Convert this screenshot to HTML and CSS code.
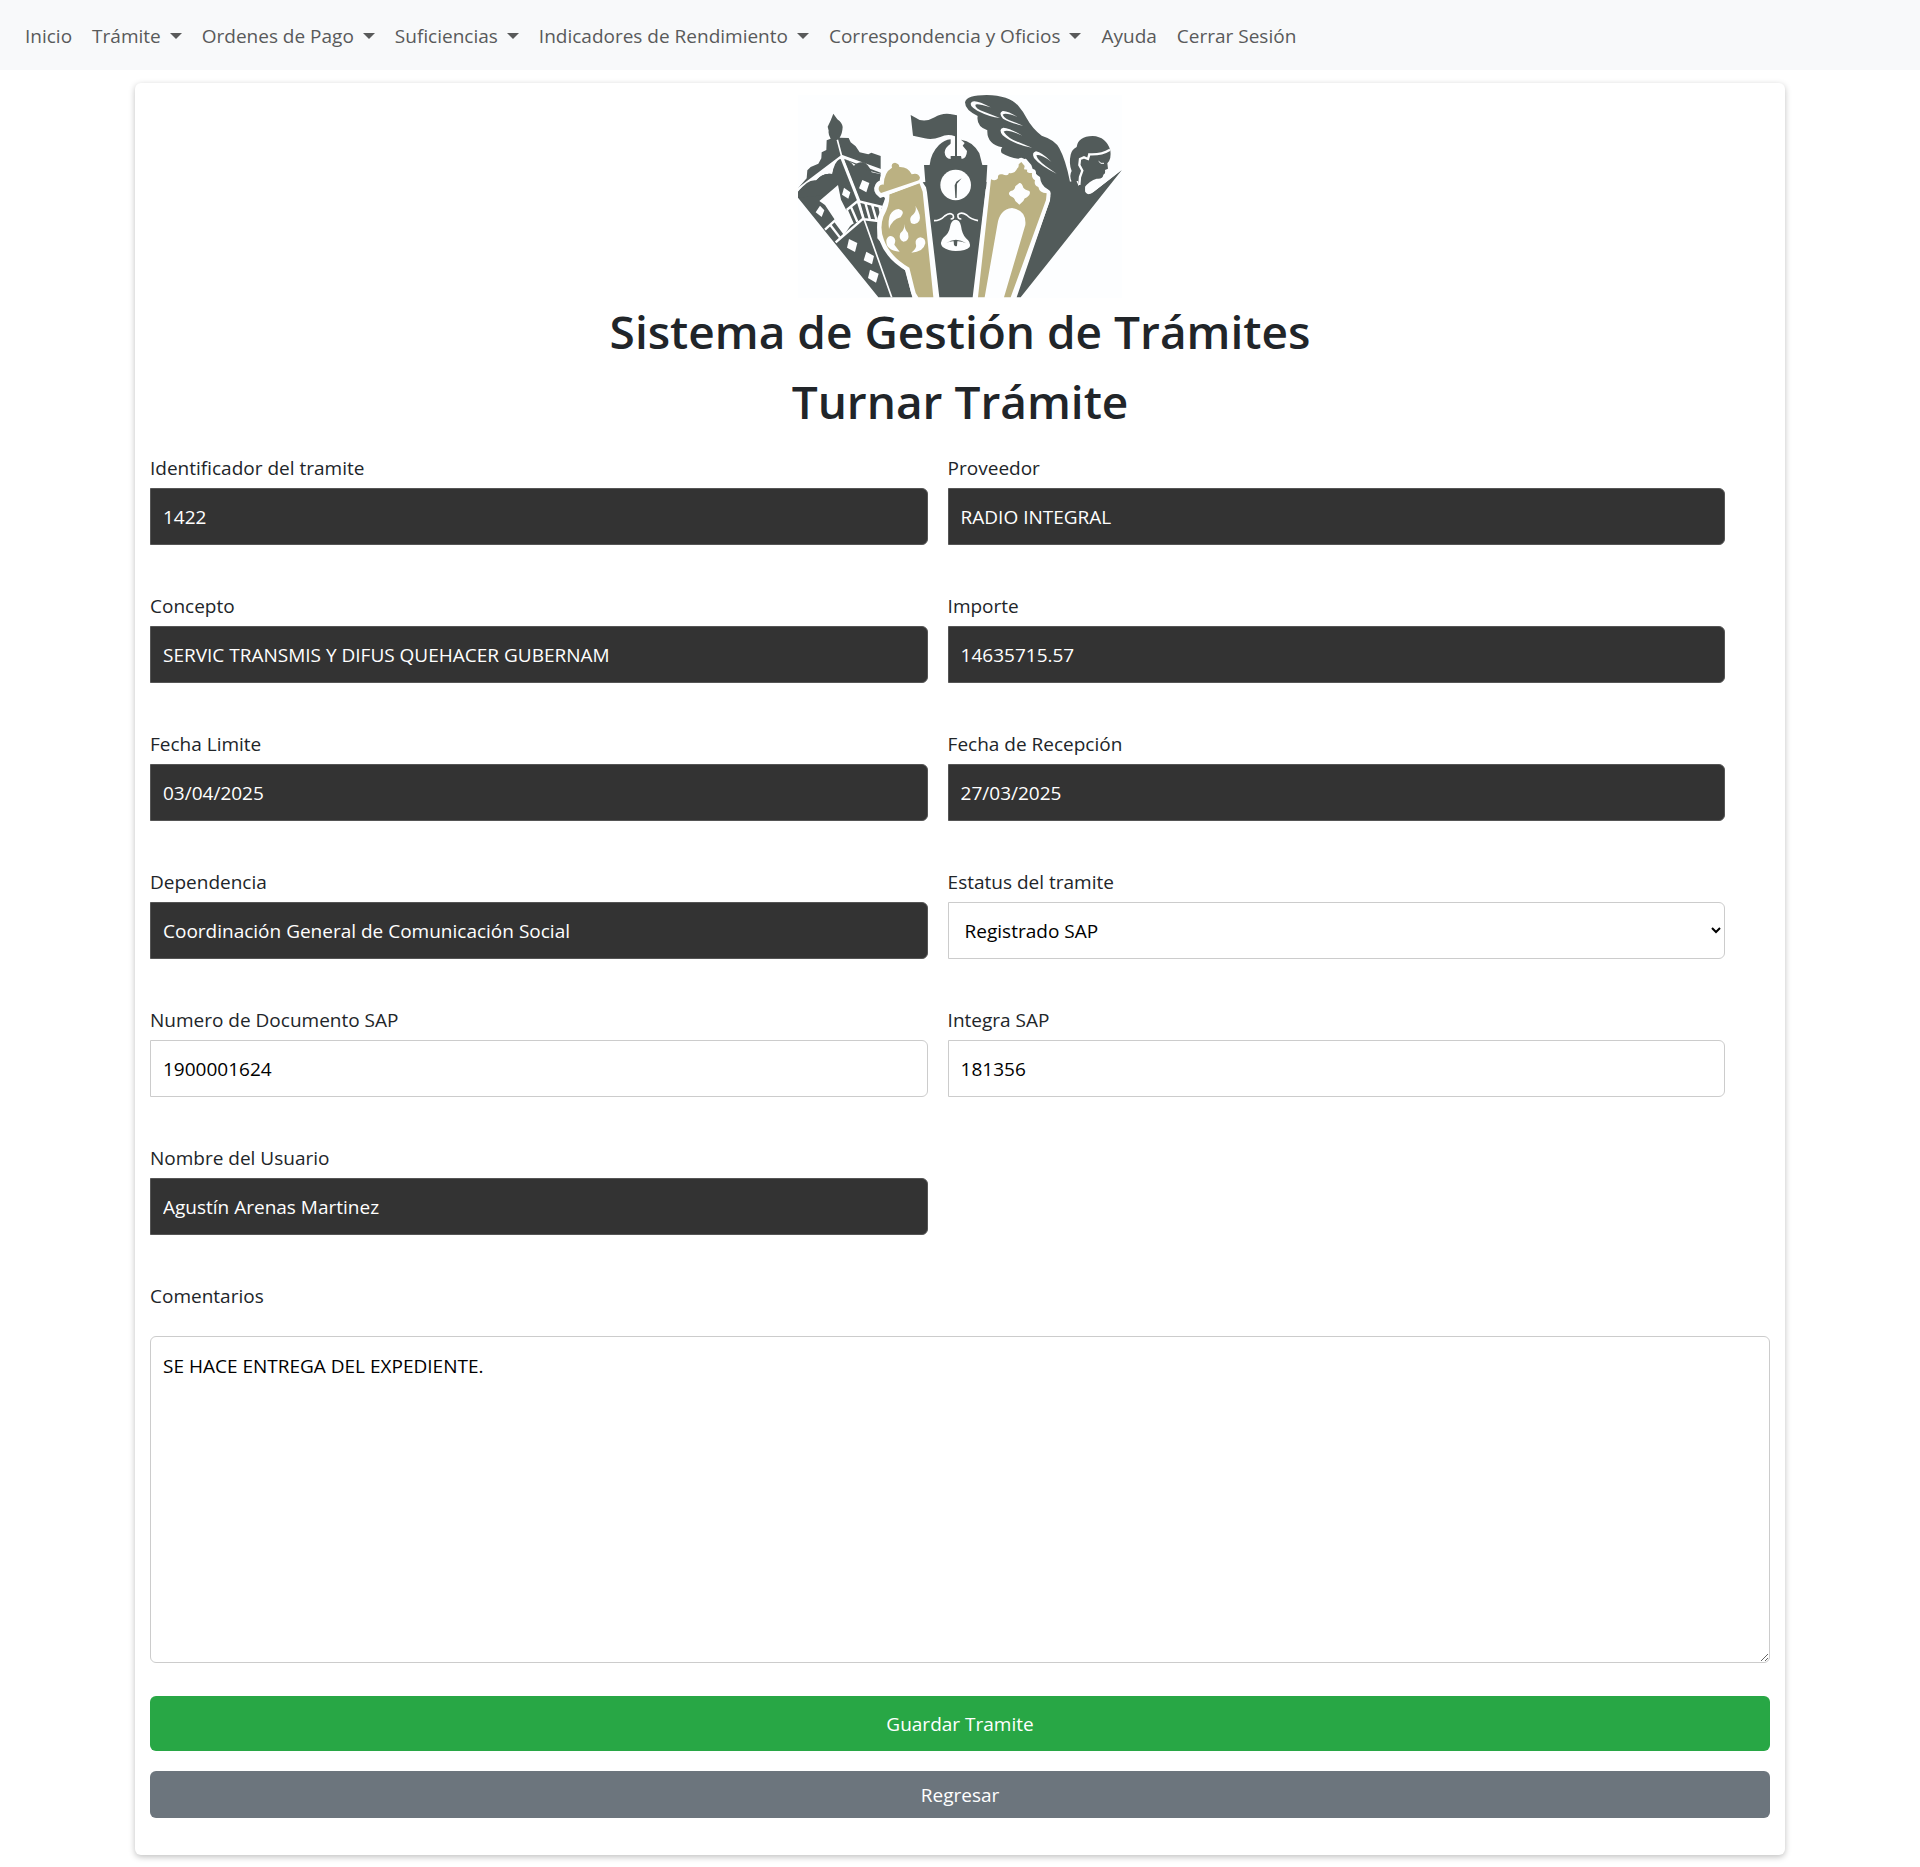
FILE: index.html
```html
<!DOCTYPE html>
<html lang="es">
<head>
<meta charset="utf-8">
<meta name="viewport" content="width=device-width, initial-scale=1">
<title>Turnar Trámite</title>
<link rel="stylesheet" href="styles.css">
</head>
<body>
<nav class="navbar">
  <a class="nav-link" href="#">Inicio</a>
  <a class="nav-link dropdown" href="#">Trámite</a>
  <a class="nav-link dropdown" href="#">Ordenes de Pago</a>
  <a class="nav-link dropdown" href="#">Suficiencias</a>
  <a class="nav-link dropdown" href="#">Indicadores de Rendimiento</a>
  <a class="nav-link dropdown" href="#">Correspondencia y Oficios</a>
  <a class="nav-link" href="#">Ayuda</a>
  <a class="nav-link" href="#">Cerrar Sesión</a>
</nav>
<main class="card">
  <header class="header">
    <svg class="logo" viewBox="24 30 972 609" role="img" aria-label="Logotipo">
      <rect class="paper" x="24" y="30" width="972" height="609"/>
      <!-- left tower -->
      <path class="dark" d="M130 86L142 103Q157 114 158 126Q157 146 149 158L176 159L182 172L197 184L209 202L235 208L244 203L272 213L272 290L262 320L286 340L262 400L262 460L345 556L367 637L265 637L24 338L24 310L50 280L52 256L62 246L85 236L94 220L95 202L109 195L110 166L122 161Q114 148 116 137L113 125Q122 108 130 86Z"/>
      <path class="paper" d="M24 308L155 209L273 252L273 268L245 262Q232 228 212 232Q198 234 192 243Q176 222 158 223L148 223Q132 232 127 267Q98 262 79 286Q52 282 24 322Z"/>
      <path class="dark" d="M155 219L272 263L272 267L230 255Z"/>
      <path class="dark" d="M24 338L24 320Q36 306 44 304Q62 312 79 286Q98 262 127 267Q132 240 153 221L175 290L110 330Z"/>
      <path class="paper" d="M88 348L144 300L153 344L169 376L190 414L180 424L164 447L133 402L105 360Z"/>
      <g class="cut" stroke-width="7">
        <path d="M142 164L155 214L207 349L222 402L305 637" stroke-width="5"/>
        <path d="M155 217L207 349" stroke-width="9"/>
        <path d="M105 434L134 407L164 447L137 472L218 402L266 408M121 420L150 458M170 375L203 348L276 366M170 375L188 417M182 364L202 410M203 348L220 400M226 354L240 404M246 359L260 407M268 363L276 401"/>
      </g>
      <path class="paper" d="M90 362L103 376L95 396L77 382ZM162 308L181 322L175 341L156 329ZM217 285L238 294L229 322L207 310ZM177 462L202 474L195 501L171 488ZM229 500L252 513L246 538L221 526ZM240 554L266 566L258 593L234 579Z"/>
      <!-- lantern column -->
      <g class="edge">
        <path class="gold" d="M298 328L388 293Q395 312 398 320L430 637L385 637Q375 624 373 609L358 548Q300 515 282 465Q268 430 280 395Q300 360 298 328Z"/>
        <path class="gold" d="M273 324Q262 315 268 304Q272 297 281 299Q282 262 306 248Q302 235 315 233Q328 236 328 246Q354 245 365 268Q385 262 390 278Q389 286 382 287Z"/>
      </g>
      <path class="gold" d="M298 328L388 293L398 320L430 637L385 637Q375 624 373 609L358 548Q300 515 282 465Q268 430 280 395Q300 360 298 328Z"/>
      <path class="gold" d="M273 324Q262 315 268 304Q272 297 281 299Q282 262 306 248Q302 235 315 233Q328 236 328 246Q354 245 365 268Q385 262 390 278Q389 286 382 287Z"/>
      <path class="cut" stroke-width="6" d="M290 328L390 291"/>
      <path class="paper" d="M297 432Q290 376 326 372Q348 378 332 397Q306 403 297 432ZM376 362Q395 393 388 407Q378 423 363 414Q355 398 371 387Q381 376 376 362ZM343 417Q344 434 354 444Q360 469 340 470Q324 464 331 445Q344 435 343 417ZM329 500Q286 496 289 465Q296 447 310 456Q320 464 313 479ZM364 503Q383 490 377 475Q375 461 391 457Q407 459 406 475Q400 502 364 503Z"/>
      <!-- clock tower -->
      <path class="dark" d="M402 240L419 240Q422 205 447 180Q463 165 482 163L482 213L513 213L513 164Q549 169 568 205L577 240L592 240L589 290L597 293L587 312L548 637L448 637L411 322L408 307L398 292L406 291Z"/>
      <path class="paper" d="M482 176Q465 187 464 202Q465 221 482 222L482 213L496 213L496 155ZM513 164L524 174L518 182L531 198Q530 220 515 222L513 213Z"/>
      <path class="dark" d="M362 90L389 105Q413 110 434 97Q454 84 480 87L501 91L501 216L495 216L495 154Q473 145 451 156Q426 166 404 160L369 152Z"/>
      <circle class="paper" cx="497" cy="300" r="46"/>
      <path class="dark" d="M515 280L499 290L494 301L496 339L500 339L501 296Z"/>
      <path class="paper" d="M497 404Q483 405 480 426Q477 446 460 458Q447 474 458 486Q475 498 497 498Q528 498 539 486Q543 471 528 460Q516 447 513 423Q509 404 497 404Z"/>
      <path class="dark" d="M468 475Q497 454 529 475Q512 468 502 469L501 482Q497 486 492 480L491 469Q480 468 468 475Z"/>
      <g class="cut" stroke-width="5">
        <path d="M432 407Q451 407 464 393Q480 380 489 390Q494 402 482 402"/>
        <path d="M564 407Q543 403 530 390Q514 379 504 389Q502 402 514 402"/>
      </g>
      <g transform="translate(480)">
        <!-- winged figure -->
        <path class="dark" d="M45 52Q50 30 110 30Q179 31 206 64Q222 83 231 101Q246 129 275 152Q316 165 328 190Q347 225 360 290L378 285L386 303L405 300L406 321Q415 333 431 321L515 256L212 637L200 637L298 350Q305 325 292 312Q272 300 270 276Q250 264 244 240L228 221Q190 225 155 204Q150 195 157 187Q110 177 112 136Q78 124 83 93Q45 75 45 52Z"/>
        <path class="dark" d="M362 209Q365 194 380 186Q384 154 428 153Q469 155 481 196Q485 223 472 235L474 251L465 255Q467 267 460 269Q459 283 440 281Q419 286 402 309L387 303L384 288L365 290Q357 271 365 258Q356 235 362 209Z"/>
        <path class="paper" d="M446 294Q417 296 407 306Q402 323 416 328L429 321L515 256L475 274L452 288Z"/>
        <path class="dark" d="M515 256L420 331L440 335Z"/>
        <path class="cut" stroke-width="7" d="M388 300L390 276L397 257L388 240L390 222L402 217L414 222L418 208Q454 210 480 194"/>
        <path class="cut" stroke-width="3" d="M446 229Q452 238 462 235"/>
        <g class="feather">
          <path d="M150 99Q119 96 82 77Q54 61 65 51Q77 43 122 67Q78 54 76 60Q75 71 106 82Z"/>
          <path d="M219 122Q178 113 159 101Q144 84 158 78Q173 77 203 96Q166 81 158 89Q164 102 190 110Z"/>
          <path d="M246 188Q190 178 158 151Q144 132 160 128Q180 129 217 152Q171 131 161 140Q175 161 205 171Z"/>
          <path d="M320 266Q270 242 252 219Q244 203 258 199Q275 202 304 230Q270 205 259 211Q262 225 288 244Z"/>
        </g>
        <!-- arch -->
        <path class="arch" d="M214 231L228 255Q232 263 246 264Q244 280 255 286Q257 301 272 318L290 325L288 345L182 637L84 637L123 283L139 286L150 270Q167 276 177 264Q194 268 202 250Z"/>
        <path class="gold" d="M214 231L224 243L222 253L232 254Q227 265 246 264Q244 280 255 286Q251 302 265 306Q268 323 290 325L288 345L182 637L162 637L226 420Q230 375 186 369Q148 373 142 420L104 637L84 637L123 283Q136 290 144 280Q142 265 157 268Q175 275 177 264Q194 268 202 250Q207 248 206 238Z"/>
        <path class="paper" d="M208 294Q216 293 220 308Q223 313 238 318Q244 327 231 337Q222 339 220 348L208 359L196 348Q194 338 181 333Q172 325 182 318Q195 316 196 304Z"/>
      </g>
    </svg>
    <h1 class="title">Sistema de Gestión de Trámites</h1>
    <h1 class="title">Turnar Trámite</h1>
  </header>
  <form class="form">
    <div class="fields">
      <div class="field"><label for="tramite">Identificador del tramite</label><input class="control locked" id="tramite" type="text" value="1422" readonly></div>
      <div class="field"><label for="proveedor">Proveedor</label><input class="control locked" id="proveedor" type="text" value="RADIO INTEGRAL" readonly></div>
      <div class="field"><label for="concepto">Concepto</label><input class="control locked" id="concepto" type="text" value="SERVIC TRANSMIS Y DIFUS QUEHACER GUBERNAM" readonly></div>
      <div class="field"><label for="importe">Importe</label><input class="control locked" id="importe" type="text" value="14635715.57" readonly></div>
      <div class="field"><label for="limite">Fecha Limite</label><input class="control locked" id="limite" type="text" value="03/04/2025" readonly></div>
      <div class="field"><label for="recepcion">Fecha de Recepción</label><input class="control locked" id="recepcion" type="text" value="27/03/2025" readonly></div>
      <div class="field"><label for="dependencia">Dependencia</label><input class="control locked" id="dependencia" type="text" value="Coordinación General de Comunicación Social" readonly></div>
      <div class="field"><label for="estatus">Estatus del tramite</label><select class="control" id="estatus"><option>Registrado SAP</option></select></div>
      <div class="field"><label for="documento">Numero de Documento SAP</label><input class="control" id="documento" type="text" value="1900001624"></div>
      <div class="field"><label for="integra">Integra SAP</label><input class="control" id="integra" type="text" value="181356"></div>
      <div class="field"><label for="usuario">Nombre del Usuario</label><input class="control locked" id="usuario" type="text" value="Agustín Arenas Martinez" readonly></div>
    </div>
    <label class="comments-label" for="comentarios">Comentarios</label>
    <textarea class="comments" id="comentarios">SE HACE ENTREGA DEL EXPEDIENTE.</textarea>
    <button class="button save" type="submit">Guardar Tramite</button>
    <button class="button back" type="button">Regresar</button>
  </form>
</main>
</body>
</html>
```

FILE: styles.css
```css
* { box-sizing: border-box; }

body {
  margin: 0;
  background: #fff;
  color: #212529;
  font: 19px/30px "Open Sans", "Noto Sans", sans-serif;
}

.navbar {
  display: flex;
  flex-wrap: wrap;
  padding: 11px 15px 9px;
  background: #f8f9fa;
}

.nav-link {
  display: flex;
  align-items: center;
  gap: 9px;
  padding: 10px;
  color: #595a5a;
  text-decoration: none;
}

.dropdown::after {
  content: "";
  border: 6px solid transparent;
  border-top-color: currentColor;
  border-bottom: 0;
}

.card {
  max-width: 1650px;
  margin: 13px auto 12px;
  padding: 12px 15px 37px;
  border-radius: 6px;
  background: #fff;
  box-shadow: 0 2px 6px rgba(0, 0, 0, .25);
}

.header { text-align: center; }

.logo {
  display: block;
  width: 324px;
  height: 203px;
  margin: 0 auto 3px;
}

.dark { fill: #525b5a; }
.gold { fill: #bbb182; }
.paper, .feather { fill: #fdfeff; }
.cut { fill: none; stroke: #fdfeff; }
.edge { stroke: #fdfeff; stroke-width: 26px; }
.arch { fill: #fdfeff; stroke: #fdfeff; stroke-width: 24px; stroke-linejoin: round; }

.title {
  margin: 0 0 10px;
  font-size: 46px;
  font-weight: 600;
  line-height: 60px;
}

.form {
  display: flex;
  flex-direction: column;
  padding-top: 12px;
}

.fields {
  display: grid;
  grid-template-columns: 48% 48%;
  gap: 46px 20px;
  padding-bottom: 46px;
}

.field {
  display: flex;
  flex-direction: column;
  gap: 5px;
}

.control {
  width: 100%;
  height: 57px;
  padding: 12px;
  border: 1px solid #ccc;
  border-radius: 0 6px 6px 0;
  background: #fff;
  color: #000;
  font: inherit;
}

.locked {
  border-color: #555;
  background: #333;
  color: #fff;
}

.comments {
  height: 327px;
  margin: 25px 0 33px;
  padding: 14px 12px;
  border: 1px solid #ccc;
  border-radius: 6px;
  color: #000;
  font: inherit;
  resize: vertical;
}

.button {
  border: 0;
  border-radius: 6px;
  color: #fff;
  font: inherit;
}

.save {
  height: 55px;
  margin-bottom: 20px;
  background: #28a745;
}

.back {
  height: 47px;
  background: #6c757d;
}
```
